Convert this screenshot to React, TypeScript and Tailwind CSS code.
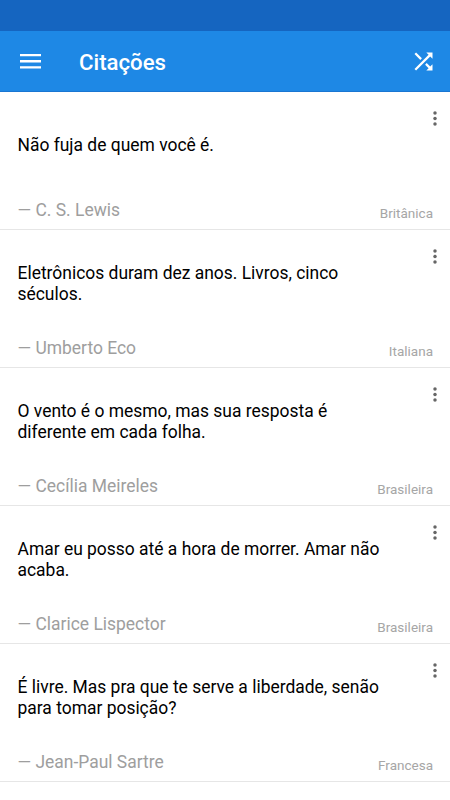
import React from "react";

const QUOTES = [
  {
    id: 1,
    text: "Não fuja de quem você é.",
    author: "C. S. Lewis",
    origin: "Britânica",
  },
  {
    id: 2,
    text: "Eletrônicos duram dez anos. Livros, cinco séculos.",
    author: "Umberto Eco",
    origin: "Italiana",
  },
  {
    id: 3,
    text: "O vento é o mesmo, mas sua resposta é diferente em cada folha.",
    author: "Cecília Meireles",
    origin: "Brasileira",
  },
  {
    id: 4,
    text: "Amar eu posso até a hora de morrer. Amar não acaba.",
    author: "Clarice Lispector",
    origin: "Brasileira",
  },
  {
    id: 5,
    text: "É livre. Mas pra que te serve a liberdade, senão para tomar posição?",
    author: "Jean-Paul Sartre",
    origin: "Francesa",
  },
];

const App = () => {
  return (
    <div className="flex h-[800px] w-[450px] flex-col overflow-hidden bg-white font-[Roboto,sans-serif]">
      {/* Status bar */}
      <div className="h-[31px] shrink-0 bg-[#1565c0]" />

      <header className="flex h-[61px] shrink-0 items-center border-b border-[#1976d2] bg-[#1e88e5] pr-[13px] pl-[17px] text-white">
        <button aria-label="Menu">
          <svg className="size-[27px]" viewBox="0 0 27 27" fill="currentColor">
            <path d="M3 6h21v2.3H3zM3 12.1h21v2.3H3zM3 18.2h21v2.3H3z" />
          </svg>
        </button>
        <h1 className="mt-[3px] ml-[35px] flex-1 text-[22.2px] font-medium">Citações</h1>
        <button aria-label="Aleatório">
          <svg className="size-[27px]" viewBox="0 0 24 24" fill="currentColor">
            <path d="M10.59 9.17L5.41 4 4 5.41l5.17 5.17 1.42-1.41zM14.5 4l2.04 2.04L4 18.59 5.41 20 17.96 7.46 20 9.5V4h-5.5zm.33 9.41l-1.41 1.41 3.13 3.13L14.5 20H20v-5.5l-2.04 2.04-3.13-3.13z" />
          </svg>
        </button>
      </header>

      <main>
        {QUOTES.map((quote) => (
          <article key={quote.id} className="flex h-[138px] flex-col border-b border-[#e6e6e6] pr-[17px] pl-[17.5px]">
            <div className="flex h-[105px]">
              <div className="flex flex-1 items-center pt-[2px]">
                <p className="w-[366px] text-[17.45px] leading-[20.7px] text-black">{quote.text}</p>
              </div>
              <button aria-label="Opções" className="mt-[14px] -mr-[13px] h-[23px] shrink-0 text-[#666666]">
                <svg className="size-[22px]" viewBox="0 0 22 22" fill="currentColor">
                  <circle cx="11" cy="6" r="1.75" />
                  <circle cx="11" cy="11.5" r="1.75" />
                  <circle cx="11" cy="17" r="1.75" />
                </svg>
              </button>
            </div>
            <footer className="flex items-start justify-between">
              <span className="mt-px text-[17.45px] leading-[24px] text-[#9e9e9e]">— {quote.author}</span>
              <span className="mt-[6px] text-[13.5px] leading-[20px] text-[#a6a6a6]">{quote.origin}</span>
            </footer>
          </article>
        ))}
      </main>
    </div>
  );
};

export default App;
